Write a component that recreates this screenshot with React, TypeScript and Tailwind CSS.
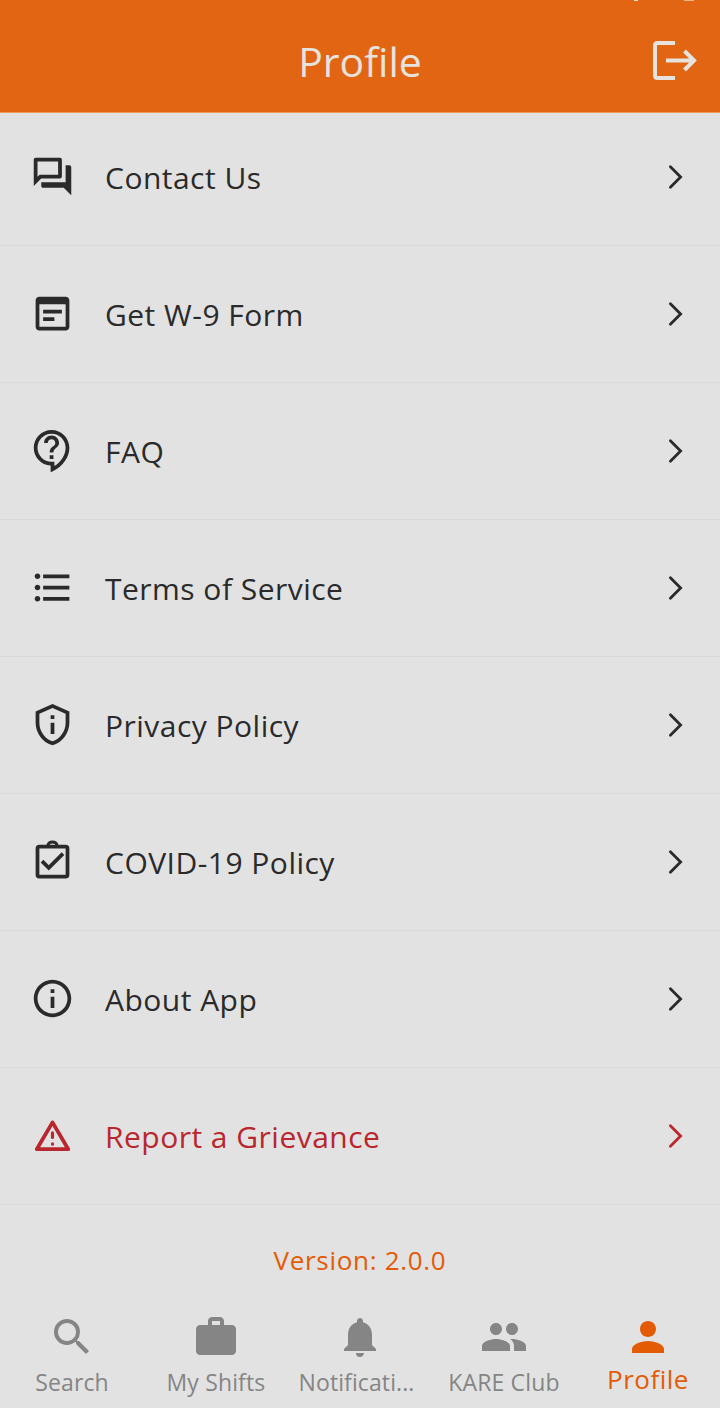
import React from "react";
import {
  MdOutlineQuestionAnswer,
  MdOutlineContactSupport,
  MdFormatListBulleted,
  MdOutlinePrivacyTip,
  MdOutlineInfo,
  MdSearch,
  MdWork,
  MdNotifications,
  MdPeople,
  MdPerson,
} from "react-icons/md";

// Form sheet with a solid header bar
function FormIcon() {
  return (
    <svg viewBox="0 0 24 24" className="size-[45px]" fill="currentColor">
      <path d="M19 3H5c-1.1 0-2 .9-2 2v14c0 1.1.9 2 2 2h14c1.1 0 2-.9 2-2V5c0-1.1-.9-2-2-2zm0 16H5V7h14v12zm-2-7H7v-2h10v2zm-4 4H7v-2h6v2z" />
    </svg>
  );
}

function ClipboardCheckIcon() {
  return (
    <svg viewBox="0 0 24 24" className="size-[45px]" fill="none" stroke="currentColor" strokeWidth="2">
      <rect x="4" y="4" width="16" height="16" rx="1" />
      <path d="M9.6 3.6a2.4 2 0 0 1 4.8 0" strokeWidth="1.7" />
      <path d="M6.4 11.8l3.6 3.6 7.6-7.6" />
    </svg>
  );
}

function WarningIcon() {
  return (
    <svg viewBox="0 0 24 24" className="size-[45px]" fill="none" stroke="currentColor" strokeWidth="2">
      <path d="M12 5L3.600 19.300h16.800z" strokeLinejoin="round" />
      <path d="M12 10.600v2.400M12 16.500v.1" strokeWidth="1.7" strokeLinecap="round" />
    </svg>
  );
}

function Chevron() {
  return (
    <svg viewBox="0 0 18 28" className="h-7 w-[18px]" fill="none" stroke="currentColor" strokeWidth="2.8" strokeLinecap="round">
      <path d="M4.4 3.8L14.6 14 4.4 24.2" />
    </svg>
  );
}

function LogoutIcon() {
  return (
    <svg viewBox="0 0 48 44" className="h-11 w-12" fill="none" stroke="currentColor" strokeWidth="4">
      <path d="M25 4H7.5Q5 4 5 6.500V36.500Q5 39 7.500 39H25" />
      <path d="M16 21.500H44M34.500 12L44 21.500L34.500 31" />
    </svg>
  );
}

const items = [
  { label: "Contact Us", icon: <MdOutlineQuestionAnswer size={45} /> },
  { label: "Get W-9 Form", icon: <FormIcon /> },
  { label: "FAQ", icon: <MdOutlineContactSupport size={45} /> },
  { label: "Terms of Service", icon: <MdFormatListBulleted size={45} /> },
  { label: "Privacy Policy", icon: <MdOutlinePrivacyTip size={45} /> },
  { label: "COVID-19 Policy", icon: <ClipboardCheckIcon /> },
  { label: "About App", icon: <MdOutlineInfo size={45} /> },
  { label: "Report a Grievance", icon: <WarningIcon />, danger: true },
];

const tabs = [
  { label: "Search", icon: <MdSearch size={48} /> },
  { label: "My Shifts", icon: <MdWork size={48} /> },
  { label: "Notificati...", icon: <MdNotifications size={48} />, clipped: true },
  { label: "KARE Club", icon: <MdPeople size={48} /> },
];

export default function App() {
  return (
    <div className="flex h-[1408px] w-[720px] flex-col overflow-hidden bg-[#e2e2e2] font-['Open_Sans',sans-serif] text-[#2a2a2a]">
      {/* Header */}
      <header className="flex h-[113px] shrink-0 flex-col border-b border-[#ee9a5c] bg-[#e26513] text-[#e6e2dd]">
        {/* Lower edge of the status bar icons */}
        <div className="flex h-px justify-end gap-[46px] pr-[26px]">
          <span className="h-px w-1 bg-[#e6dcd2]" />
          <span className="h-px w-2.5 bg-[#e8b48c]" />
        </div>
        <div className="grid flex-1 grid-cols-3 items-center pt-2.5">
          <div />
          <h1 className="text-center text-[41px] leading-none font-normal">Profile</h1>
          <div className="flex justify-end pr-[22px] pb-0.5">
            <LogoutIcon />
          </div>
        </div>
      </header>

      {/* Menu */}
      <main className="flex h-[1092px] shrink-0 flex-col justify-end overflow-hidden">
        {items.map((item) => (
          <div
            key={item.label}
            className={`flex h-[137px] shrink-0 items-center border-b border-[#d9d9d9] pr-9 pl-[30px] ${
              item.danger ? "text-[#b9262d]" : ""
            }`}
          >
            <div className="pb-0.5">{item.icon}</div>
            <span className="ml-[30px] flex-1 pt-0.5 text-[30px] leading-10 tracking-[0.48px]">{item.label}</span>
            <Chevron />
          </div>
        ))}
      </main>

      {/* Version */}
      <div className="flex h-[92px] shrink-0 items-center justify-center pt-[18px] text-[26px] text-[#e35b05]">
        <span className="tracking-[0.7px]">Version: 2.0.0</span>
      </div>

      {/* Bottom tabs */}
      <nav className="grid flex-1 grid-cols-5 text-[#858585]">
        {tabs.map((tab) => (
          <div key={tab.label} className="flex flex-col items-center pt-4">
            {tab.icon}
            <span
              className={`mt-[5px] text-[23px] leading-8 whitespace-nowrap ${
                tab.clipped ? "pr-[7px] tracking-[0.1px]" : "tracking-[0.15px]"
              }`}
            >
              {tab.label}
            </span>
          </div>
        ))}
        <div className="flex flex-col items-center pt-4 text-[#e35b05]">
          <MdPerson size={48} />
          <span className="mt-0.5 text-[26px] leading-8 tracking-[0.5px]">Profile</span>
        </div>
      </nav>
    </div>
  );
}
